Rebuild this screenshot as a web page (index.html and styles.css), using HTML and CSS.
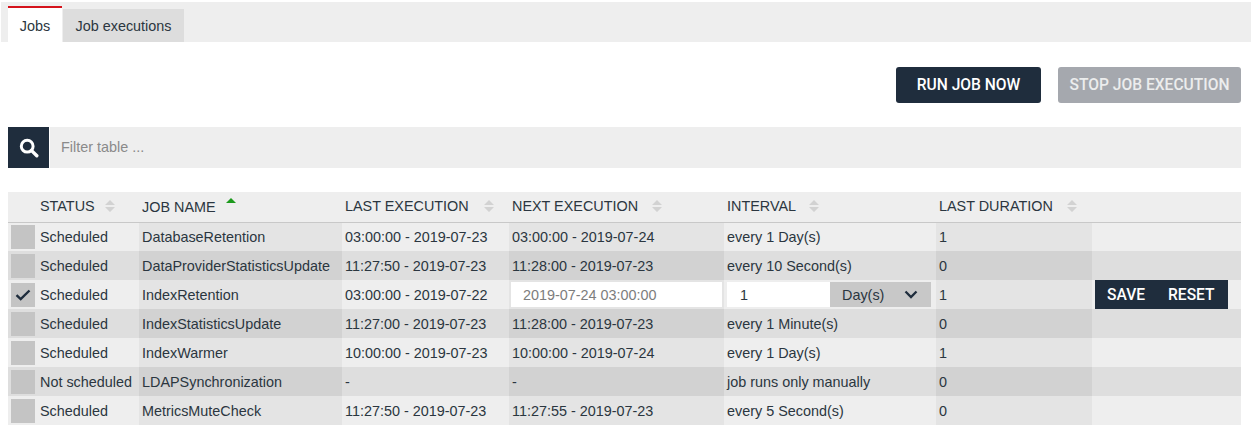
FILE: index.html
```html
<!DOCTYPE html>
<html lang="en">
<head>
<meta charset="utf-8">
<title>Jobs</title>
<link rel="stylesheet" href="styles.css">
</head>
<body>
<nav class="tabs">
  <a class="tab tab-active">Jobs</a>
  <a class="tab">Job executions</a>
</nav>
<main class="content">
  <div class="actions">
    <button class="btn btn-run">RUN JOB NOW</button>
    <button class="btn btn-stop">STOP JOB EXECUTION</button>
  </div>
  <div class="filter">
    <span class="filter-icon">
      <svg width="20" height="20" viewBox="0 0 20 20"><circle cx="8.2" cy="8.2" r="5.9" fill="none" stroke="#fff" stroke-width="3"/><path d="M12.6 12.6l5.2 5.2" stroke="#fff" stroke-width="3.4" stroke-linecap="round"/></svg>
    </span>
    <span class="filter-input">Filter table ...</span>
  </div>
  <table class="jobs">
    <colgroup>
      <col class="c-check"><col class="c-status"><col class="c-name"><col class="c-last"><col class="c-next"><col class="c-interval"><col class="c-duration"><col class="c-actions">
    </colgroup>
    <thead>
      <tr>
        <th></th>
        <th>STATUS<svg class="sort" width="10" height="14" viewBox="0 0 10 14"><path d="M5 1l5 5H0zM5 13L0 8h10z" fill="#d2d2d2"/></svg></th>
        <th>JOB NAME<svg class="sort sort-name" width="10" height="14" viewBox="0 0 10 14"><path d="M5 1l5 5H0z" fill="#1c9a1c"/></svg></th>
        <th>LAST EXECUTION<svg class="sort" width="10" height="14" viewBox="0 0 10 14"><path d="M5 1l5 5H0zM5 13L0 8h10z" fill="#d2d2d2"/></svg></th>
        <th>NEXT EXECUTION<svg class="sort" width="10" height="14" viewBox="0 0 10 14"><path d="M5 1l5 5H0zM5 13L0 8h10z" fill="#d2d2d2"/></svg></th>
        <th>INTERVAL<svg class="sort" width="10" height="14" viewBox="0 0 10 14"><path d="M5 1l5 5H0zM5 13L0 8h10z" fill="#d2d2d2"/></svg></th>
        <th>LAST DURATION<svg class="sort" width="10" height="14" viewBox="0 0 10 14"><path d="M5 1l5 5H0zM5 13L0 8h10z" fill="#d2d2d2"/></svg></th>
        <th></th>
      </tr>
    </thead>
    <tbody>
      <tr><td class="cc"><span class="box"></span></td><td>Scheduled</td><td>DatabaseRetention</td><td>03:00:00 - 2019-07-23</td><td>03:00:00 - 2019-07-24</td><td>every 1 Day(s)</td><td>1</td><td></td></tr>
      <tr><td class="cc"><span class="box"></span></td><td>Scheduled</td><td>DataProviderStatisticsUpdate</td><td>11:27:50 - 2019-07-23</td><td>11:28:00 - 2019-07-23</td><td>every 10 Second(s)</td><td>0</td><td></td></tr>
      <tr class="editing">
        <td class="cc"><span class="box"><svg width="16" height="12" viewBox="0 0 16 12"><path d="M1.5 6.2l4.2 4L14.5 1.5" fill="none" stroke="#1f2d3d" stroke-width="2.4"/></svg></span></td>
        <td>Scheduled</td><td>IndexRetention</td><td>03:00:00 - 2019-07-22</td>
        <td class="ed-next"><span class="field field-date">2019-07-24 03:00:00</span></td>
        <td class="ed-int"><div class="interval-edit"><span class="field field-num">1</span><span class="select">Day(s)<svg width="14" height="9" viewBox="0 0 14 9"><path d="M1.5 1.5L7 7l5.5-5.5" fill="none" stroke="#1f2d3d" stroke-width="2.3"/></svg></span></div></td>
        <td>1</td>
        <td class="ed-act"><div class="row-btns"><span>SAVE</span><span>RESET</span></div></td>
      </tr>
      <tr><td class="cc"><span class="box"></span></td><td>Scheduled</td><td>IndexStatisticsUpdate</td><td>11:27:00 - 2019-07-23</td><td>11:28:00 - 2019-07-23</td><td>every 1 Minute(s)</td><td>0</td><td></td></tr>
      <tr><td class="cc"><span class="box"></span></td><td>Scheduled</td><td>IndexWarmer</td><td>10:00:00 - 2019-07-23</td><td>10:00:00 - 2019-07-24</td><td>every 1 Day(s)</td><td>1</td><td></td></tr>
      <tr><td class="cc"><span class="box"></span></td><td>Not scheduled</td><td>LDAPSynchronization</td><td>-</td><td>-</td><td>job runs only manually</td><td>0</td><td></td></tr>
      <tr><td class="cc"><span class="box"></span></td><td>Scheduled</td><td>MetricsMuteCheck</td><td>11:27:50 - 2019-07-23</td><td>11:27:55 - 2019-07-23</td><td>every 5 Second(s)</td><td>0</td><td></td></tr>
    </tbody>
  </table>
</main>
</body>
</html>
```
FILE: styles.css
```css
* { box-sizing: border-box; }
html, body { margin: 0; background: #fff; }
body {
  font-family: "Liberation Sans", Arial, sans-serif;
  font-size: 14.4px;
  color: #2b3640;
  overflow: hidden;
}
.tabs {
  display: flex;
  align-items: flex-end;
  gap: 1px;
  height: 40px;
  margin: 2px 0 0 1px;
  padding-left: 7px;
  background: #eee;
}
.tab {
  display: flex;
  align-items: center;
  justify-content: center;
  height: 33px;
  width: 121px;
  padding-top: 1px;
  background: #ddd;
}
.tab-active {
  width: 54px;
  height: 36px;
  padding-top: 2px;
  background: #fff;
  border-top: 2px solid #d5131c;
}
.content { padding: 0 10px 0 8px; }
.actions {
  display: flex;
  justify-content: flex-end;
  gap: 17px;
  margin-top: 25px;
}
.btn {
  height: 36px;
  border: 0;
  border-radius: 3px;
  color: #fff;
  font-family: Roboto, "Liberation Sans", sans-serif;
  font-size: 15.6px;
  font-weight: 500;
  padding: 0;
}
.btn-run { width: 145px; background: #1f2d3d; }
.btn-stop { width: 183px; background: #a5a8ae; color: #eceded; }
.filter {
  display: flex;
  gap: 1px;
  height: 41px;
  margin-top: 24px;
}
.filter-icon {
  display: flex;
  align-items: center;
  justify-content: center;
  width: 41px;
  background: #1f2d3d;
}
.filter-input {
  flex: 1;
  display: flex;
  align-items: center;
  padding: 0 0 2px 11px;
  background: #eee;
  color: #8a8a8a;
}
.jobs {
  width: 1233px;
  margin-top: 24px;
  border-collapse: collapse;
  table-layout: fixed;
}
.c-check { width: 29px; }
.c-status { width: 102px; }
.c-name { width: 203px; }
.c-last { width: 167px; }
.c-next { width: 215px; }
.c-interval { width: 212px; }
.c-duration { width: 156px; }
.c-actions { width: 149px; }
th {
  height: 30px;
  padding: 0 3px 1px;
  background: #eee;
  border-bottom: 1px solid #c8c8c8;
  font-weight: 400;
  text-align: left;
  white-space: nowrap;
}
td {
  height: 29px;
  padding: 0 3px;
  white-space: nowrap;
  overflow: hidden;
}
.sort { margin-left: 14px; vertical-align: -2px; }
th:nth-child(2) .sort { margin-left: 10px; }
th:nth-child(4) .sort { margin-left: 15px; }
th:nth-child(6) .sort { margin-left: 13px; }
th .sort-name { vertical-align: 1px; margin-left: 10px; }
tbody tr:nth-child(odd) td { background: #eee; }
tbody tr:nth-child(odd) td:nth-child(3),
tbody tr:nth-child(odd) td:nth-child(5),
tbody tr:nth-child(odd) td:nth-child(7) { background: #e4e4e4; }
tbody tr:nth-child(even) td { background: #dedede; }
tbody tr:nth-child(even) td:nth-child(3),
tbody tr:nth-child(even) td:nth-child(5),
tbody tr:nth-child(even) td:nth-child(7) { background: #d2d2d2; }
td.cc { padding: 0 0 0 3px; }
.box {
  display: flex;
  align-items: center;
  justify-content: center;
  width: 24px;
  height: 24px;
  background: #c4c4c4;
}
td.ed-next { padding: 0 2px; }
td.ed-int { padding: 0 5px 0 3px; }
td.ed-act { padding: 0 0 0 3px; }
.field {
  display: flex;
  align-items: center;
  height: 25px;
  background: #fff;
}
.field-date { padding-left: 12px; color: #7d7d7d; }
.interval-edit { display: flex; }
.field-num { width: 103px; padding-left: 13px; }
.select {
  display: flex;
  align-items: center;
  justify-content: space-between;
  width: 101px;
  height: 25px;
  padding: 0 13px 0 12px;
  background: #c8c8c8;
}
.row-btns {
  display: flex;
  align-items: center;
  gap: 23px;
  width: 133px;
  height: 29px;
  padding-left: 12px;
  background: #1f2d3d;
  color: #fff;
  font-family: Roboto, "Liberation Sans", sans-serif;
  font-size: 15.6px;
  font-weight: 500;
}
```
